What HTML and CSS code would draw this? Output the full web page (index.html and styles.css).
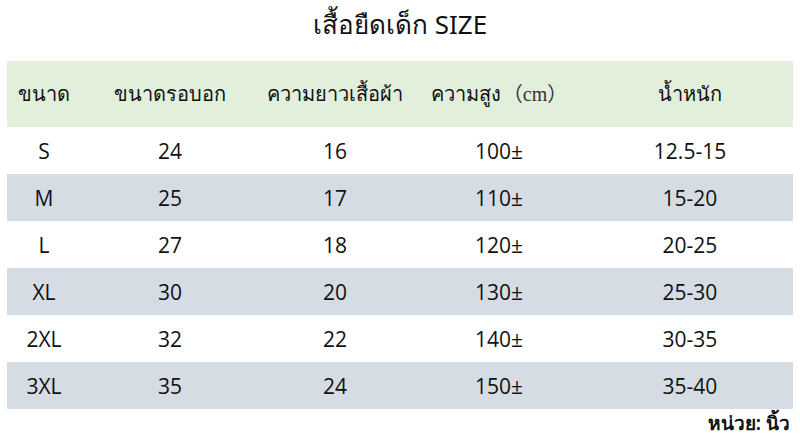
FILE: index.html
```html
<!DOCTYPE html>
<html lang="th">
<head>
<meta charset="utf-8">
<link rel="stylesheet" href="styles.css">
</head>
<body>
<div class="page">
  <h1 class="title">เสื้อยืดเด็ก SIZE</h1>
  <div class="table">
    <div class="row head">
      <div class="cell">ขนาด</div>
      <div class="cell">ขนาดรอบอก</div>
      <div class="cell">ความยาวเสื้อผ้า</div>
      <div class="cell">ความสูง<span class="cm">（cm）</span></div>
      <div class="cell">น้ำหนัก</div>
    </div>
    <div class="row">
      <div class="cell">S</div><div class="cell">24</div><div class="cell">16</div><div class="cell">100±</div><div class="cell">12.5-15</div>
    </div>
    <div class="row alt">
      <div class="cell">M</div><div class="cell">25</div><div class="cell">17</div><div class="cell">110±</div><div class="cell">15-20</div>
    </div>
    <div class="row">
      <div class="cell">L</div><div class="cell">27</div><div class="cell">18</div><div class="cell">120±</div><div class="cell">20-25</div>
    </div>
    <div class="row alt">
      <div class="cell">XL</div><div class="cell">30</div><div class="cell">20</div><div class="cell">130±</div><div class="cell">25-30</div>
    </div>
    <div class="row">
      <div class="cell">2XL</div><div class="cell">32</div><div class="cell">22</div><div class="cell">140±</div><div class="cell">30-35</div>
    </div>
    <div class="row alt">
      <div class="cell">3XL</div><div class="cell">35</div><div class="cell">24</div><div class="cell">150±</div><div class="cell">35-40</div>
    </div>
  </div>
  <div class="unit">หน่วย: นิ้ว</div>
</div>
</body>
</html>
```

FILE: styles.css
```css
html, body {
  margin: 0;
  padding: 0;
  background: #ffffff;
}
body {
  width: 800px;
  height: 438px;
  overflow: hidden;
  font-family: "Noto Sans", "Open Sans", sans-serif;
  color: #111;
}
.page {
  padding: 0 7px;
}
.title {
  margin: 0;
  height: 61px;
  line-height: 48px;
  text-align: center;
  font-weight: normal;
  font-size: 26px;
}
.table {
  display: flex;
  flex-direction: column;
}
.row {
  display: grid;
  grid-template-columns: 74px 178px 152px 176px 206px;
  height: 47px;
  align-items: center;
  font-size: 21px;
  font-family: "Open Sans", "Noto Sans", sans-serif;
}
.row.head {
  height: 66px;
  background: #e2efda;
  font-size: 20px;
  font-weight: 500;
  font-family: "Noto Sans", "Open Sans", sans-serif;
}
.row.alt {
  background: #d6dce4;
}
.cell {
  text-align: center;
  white-space: nowrap;
}
.cm {
  font-family: "Liberation Serif", "Noto Sans CJK SC", serif;
  font-weight: normal;
  color: #333;
  margin-left: 2px;
}
.unit {
  text-align: right;
  font-size: 19px;
  font-weight: 600;
  line-height: 28px;
  padding-right: 3px;
}
```
